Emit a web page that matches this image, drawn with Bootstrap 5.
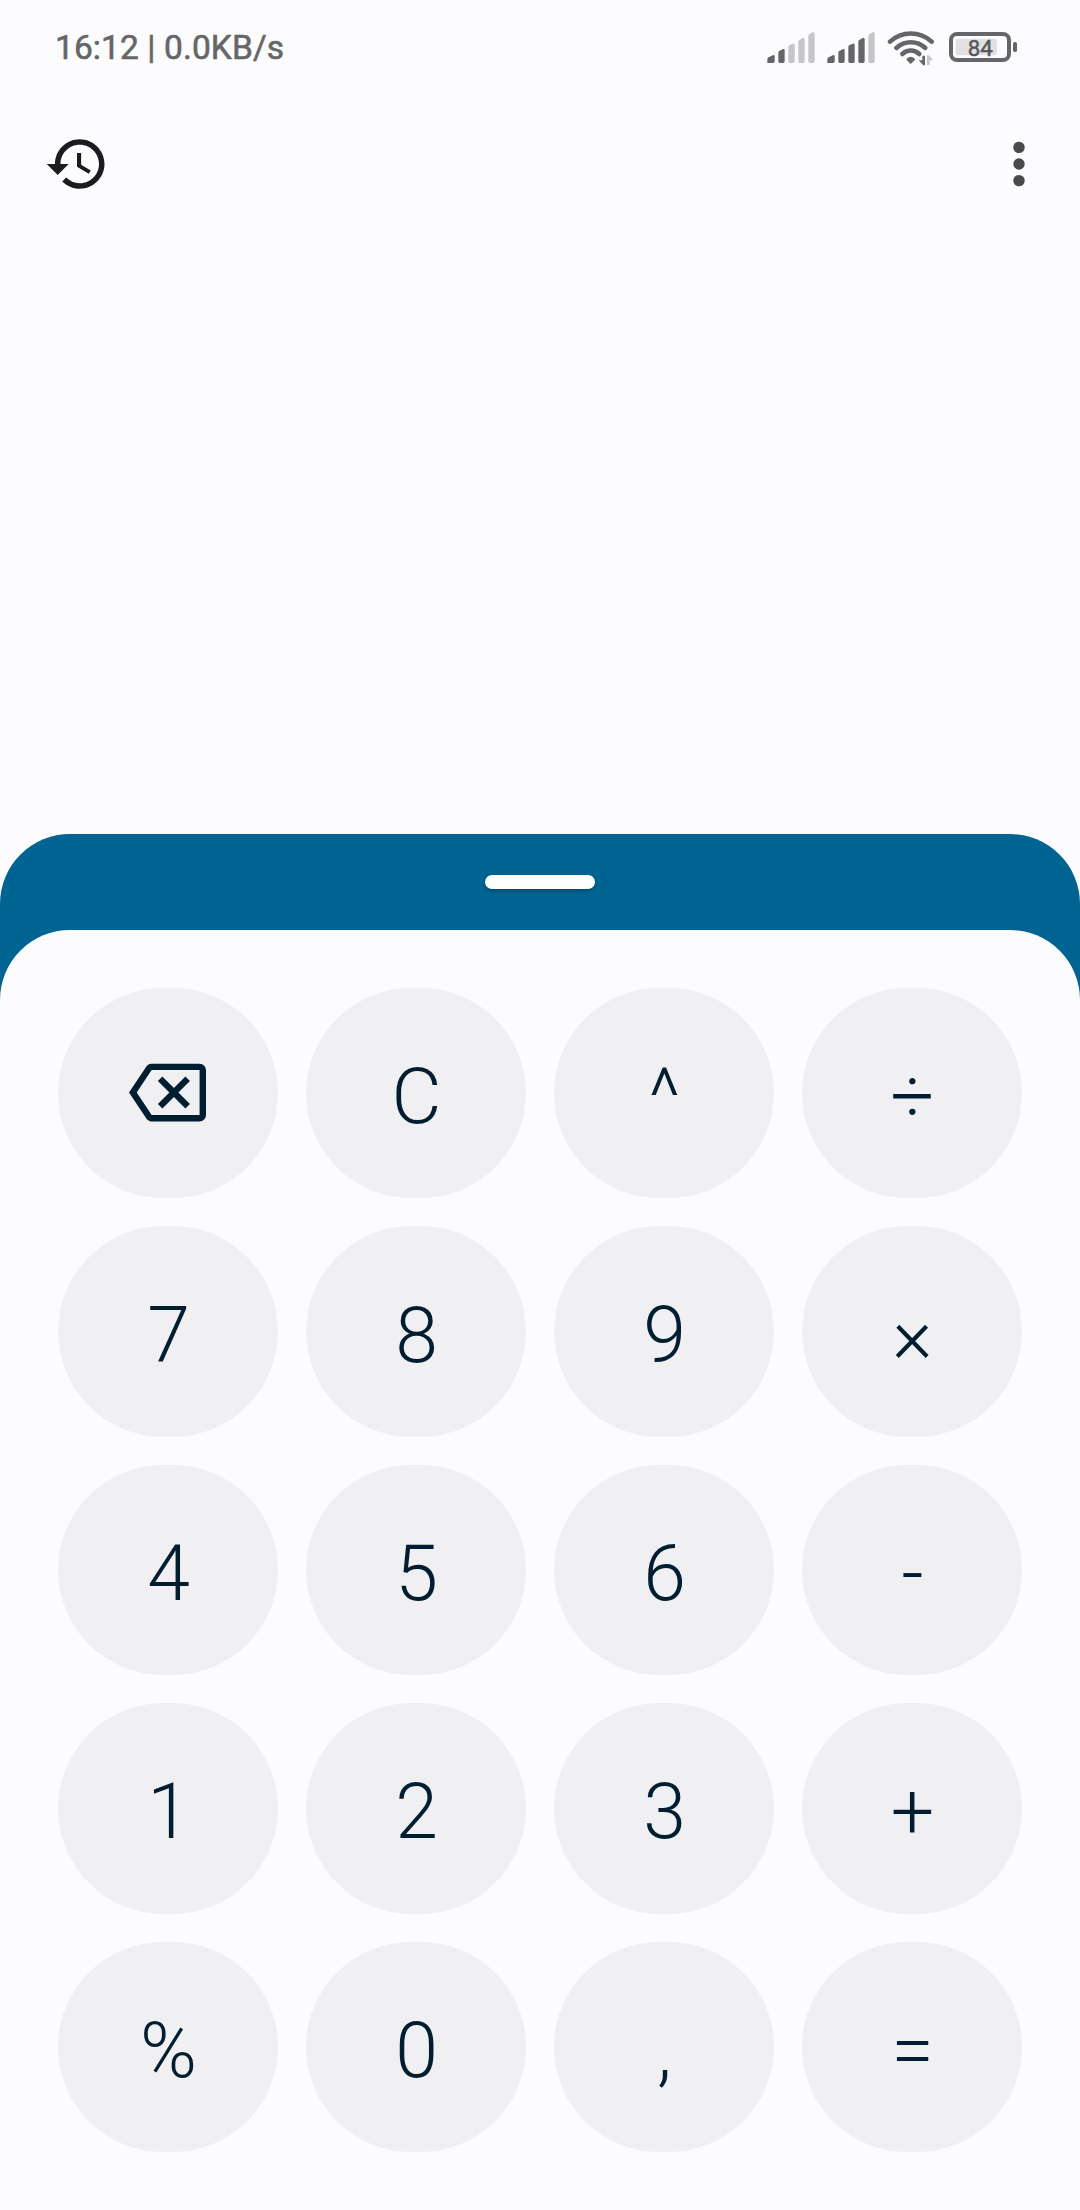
<!DOCTYPE html>
<html lang="en">
<head>
<meta charset="utf-8">
<meta name="viewport" content="width=device-width, initial-scale=1">
<title>Calculator</title>
<link href="https://cdn.jsdelivr.net/npm/bootstrap@5.3.0/dist/css/bootstrap.min.css" rel="stylesheet">
<style>
  body { background: #fcfcff; font-family: Roboto, "Noto Sans", sans-serif; }
  .screen { width: 1080px; height: 2210px; background: #fcfcff; }
  .statusbar { height: 96px; padding: 0 62px 0 55px; color: #666668; }
  .clock { font-size: 33.5px; font-weight: 400; letter-spacing: .1px; line-height: 96px; white-space: nowrap; -webkit-text-stroke: .6px #666668; }
  .signals { gap: 12px; }
  .battery { margin-left: 2px; }
  .topbar { height: 136px; padding: 0 28px 0 43.5px; }
  .display-area { height: 602px; }
  .sheet { background: #006493; border-radius: 70px 70px 0 0; }
  .grip-row { height: 96px; padding-top: 41px; }
  .grip { width: 110px; height: 14px; border-radius: 7px; background: #fff; box-shadow: 0 2px 4px rgba(0,0,0,.3); }
  .keypad { background: #fcfcff; border-radius: 70px 70px 0 0; padding: 58px; gap: 28px; }
  .keys { gap: 28px; }
  .key { background: #f0f0f2; color: #001e2f; border: 0; border-radius: 106px; padding: 0; font-size: 77px; font-weight: 300; line-height: 90px; flex: 1 1 0; }
  .key span { padding: 8px 0 0 1px; }
  .key svg { margin: 0 2px 2px 0; }
</style>
</head>
<body>
<div class="screen d-flex flex-column overflow-hidden">
  <header class="statusbar d-flex justify-content-between align-items-center">
    <div class="clock">16:12 | 0.0KB/s</div>
    <div class="signals d-flex align-items-center">
      <svg width="48" height="36" viewBox="51 45 144 108" fill="#666668">
        <path d="M52 144V134Q52 130 56 127L68 121Q74 118 74 124V139Q74 144 69 144H52Z"/>
        <path d="M85 139V113Q85 109 89 107L98 103Q104 100 104 106V139Q104 144 99 144H90Q85 144 85 139Z"/>
        <g fill="#c6c6c8">
          <path d="M115 139V96Q115 92 119 90L128 86Q134 84 134 90V139Q134 144 129 144H120Q115 144 115 139Z"/>
          <path d="M145 139V80Q145 76 149 74L158 69Q164 67 164 73V139Q164 144 159 144H150Q145 144 145 139Z"/>
          <path d="M175 139V63Q175 59 179 57L188 52Q194 50 194 56V139Q194 144 189 144H180Q175 144 175 139Z"/>
        </g>
      </svg>
      <svg width="48" height="36" viewBox="51 45 144 108" fill="#666668">
        <path d="M52 144V134Q52 130 56 127L68 121Q74 118 74 124V139Q74 144 69 144H52Z"/>
        <path d="M85 139V113Q85 109 89 107L98 103Q104 100 104 106V139Q104 144 99 144H90Q85 144 85 139Z"/>
        <path d="M115 139V96Q115 92 119 90L128 86Q134 84 134 90V139Q134 144 129 144H120Q115 144 115 139Z"/>
        <path d="M145 139V80Q145 76 149 74L158 69Q164 67 164 73V139Q164 144 159 144H150Q145 144 145 139Z"/>
        <path fill="#c6c6c8" d="M175 139V63Q175 59 179 57L188 52Q194 50 194 56V139Q194 144 189 144H180Q175 144 175 139Z"/>
      </svg>
      <svg width="48" height="36" viewBox="411 45 144 108" fill="none" stroke="#666668" stroke-width="13.500" stroke-linejoin="round">
        <path d="M420 80A92 92 0 0 1 545 80" stroke-linecap="round"/>
        <path d="M439 99A63 63 0 0 1 526 99" stroke-linecap="round"/>
        <path d="M457 117A37 37 0 0 1 508 117" stroke-linecap="round"/>
        <path d="M472 133Q482 123 493 133L482 144Z" fill="#666668" stroke-width="5"/>
        <path d="M506 136H517V122H525V151H520Z" fill="#666668" stroke="none"/>
        <path d="M531 150V121H536L550 136H539V150Z" fill="#c6c6c8" stroke="none"/>
      </svg>
      <svg class="battery" width="69" height="36" viewBox="597 45 207 108">
        <rect x="603" y="57" width="174" height="78" rx="18" fill="none" stroke="#666668" stroke-width="12"/>
        <rect x="617" y="71" width="124" height="50" rx="8" fill="#e1e1e3"/>
        <rect x="789" y="81" width="12" height="30" rx="5" fill="#666668"/>
        <text x="691" y="122" text-anchor="middle" font-family="Roboto, sans-serif" font-size="67" font-weight="400" fill="#58585a" stroke="#58585a" stroke-width="1.500">84</text>
      </svg>
    </div>
  </header>

  <nav class="topbar d-flex justify-content-between align-items-center">
    <svg width="66" height="66" viewBox="0 0 24 24" fill="#1a1c1e" role="img" aria-label="History"><path d="M13 3c-4.970 0-9 4.030-9 9H1l3.890 3.890.07.14L9 12H6c0-3.870 3.130-7 7-7s7 3.130 7 7-3.130 7-7 7c-1.930 0-3.680-.79-4.940-2.060l-1.420 1.420C8.270 19.990 10.510 21 13 21c4.970 0 9-4.030 9-9s-4.030-9-9-9zm-1 5v5l4.280 2.540.72-1.210-3.500-2.080V8H12z"/></svg>
    <svg width="66" height="66" viewBox="0 0 66 66" fill="#49494e" role="img" aria-label="More options"><circle cx="33" cy="16.400" r="5.700"/><circle cx="33" cy="33" r="5.700"/><circle cx="33" cy="49.600" r="5.700"/></svg>
  </nav>

  <main class="display-area" aria-label="Result"></main>

  <section class="sheet d-flex flex-column flex-grow-1">
    <div class="grip-row d-flex justify-content-center"><div class="grip"></div></div>
    <div class="keypad d-flex flex-column flex-grow-1">
      <div class="keys d-flex flex-fill">
        <button class="key d-flex align-items-center justify-content-center" aria-label="Backspace"><svg width="77" height="77" viewBox="0 0 24 24" fill="currentColor"><path d="M22 3H7c-.69 0-1.230.35-1.590.88L0 12l5.410 8.110c.36.53.9.89 1.590.89h15c1.100 0 2-.9 2-2V5c0-1.100-.9-2-2-2zm0 16H7.070L2.400 12l4.660-7H22v14zm-11.590-2L14 13.410 17.590 17 19 15.590 15.410 12 19 8.410 17.590 7 14 10.590 10.410 7 9 8.410 12.590 12 9 15.590z"/></svg></button>
        <button class="key d-flex align-items-center justify-content-center"><span>C</span></button>
        <button class="key d-flex align-items-center justify-content-center"><span>^</span></button>
        <button class="key d-flex align-items-center justify-content-center"><span>÷</span></button>
      </div>
      <div class="keys d-flex flex-fill">
        <button class="key d-flex align-items-center justify-content-center"><span>7</span></button>
        <button class="key d-flex align-items-center justify-content-center"><span>8</span></button>
        <button class="key d-flex align-items-center justify-content-center"><span>9</span></button>
        <button class="key d-flex align-items-center justify-content-center"><span>×</span></button>
      </div>
      <div class="keys d-flex flex-fill">
        <button class="key d-flex align-items-center justify-content-center"><span>4</span></button>
        <button class="key d-flex align-items-center justify-content-center"><span>5</span></button>
        <button class="key d-flex align-items-center justify-content-center"><span>6</span></button>
        <button class="key d-flex align-items-center justify-content-center"><span>-</span></button>
      </div>
      <div class="keys d-flex flex-fill">
        <button class="key d-flex align-items-center justify-content-center"><span>1</span></button>
        <button class="key d-flex align-items-center justify-content-center"><span>2</span></button>
        <button class="key d-flex align-items-center justify-content-center"><span>3</span></button>
        <button class="key d-flex align-items-center justify-content-center"><span>+</span></button>
      </div>
      <div class="keys d-flex flex-fill">
        <button class="key d-flex align-items-center justify-content-center"><span>%</span></button>
        <button class="key d-flex align-items-center justify-content-center"><span>0</span></button>
        <button class="key d-flex align-items-center justify-content-center"><span>,</span></button>
        <button class="key d-flex align-items-center justify-content-center"><span>=</span></button>
      </div>
    </div>
  </section>
</div>
<script src="https://cdn.jsdelivr.net/npm/bootstrap@5.3.0/dist/js/bootstrap.bundle.min.js"></script>
</body>
</html>
